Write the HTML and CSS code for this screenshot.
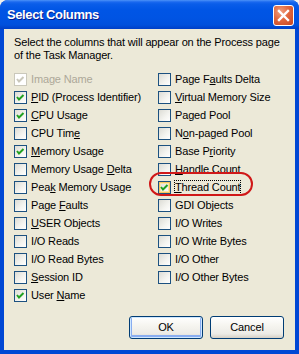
FILE: index.html
```html
<!DOCTYPE html>
<html>
<head>
<meta charset="utf-8">
<link rel="stylesheet" href="styles.css">
</head>
<body>
<div class="window">
  <div class="titlebar">
    <span class="title">Select Columns</span>
    <span class="close"><svg width="19" height="19" viewBox="0 0 19 19"><path d="M5 5 L14 14 M14 5 L5 14" stroke="#fff" stroke-width="2.4" stroke-linecap="square"/></svg></span>
  </div>
  <div class="client">
    <p class="desc">Select the columns that will appear on the Process page<br>of the Task Manager.</p>
    <div class="cols">
      <div class="col left">
        <div class="item disabled"><span class="box on"><svg viewBox="0 0 11 11"><polyline points="2,5 4,7.5 8.5,3" /></svg></span><span class="text">Image Name</span></div>
        <div class="item"><span class="box on"><svg viewBox="0 0 11 11"><polyline points="2,5 4,7.5 8.5,3" /></svg></span><span class="text"><u>P</u>ID (Process Identifier)</span></div>
        <div class="item"><span class="box on"><svg viewBox="0 0 11 11"><polyline points="2,5 4,7.5 8.5,3" /></svg></span><span class="text"><u>C</u>PU Usage</span></div>
        <div class="item"><span class="box"></span><span class="text">CPU Tim<u>e</u></span></div>
        <div class="item"><span class="box on"><svg viewBox="0 0 11 11"><polyline points="2,5 4,7.5 8.5,3" /></svg></span><span class="text"><u>M</u>emory Usage</span></div>
        <div class="item"><span class="box"></span><span class="text">Memory Usage <u>D</u>elta</span></div>
        <div class="item"><span class="box"></span><span class="text">Pea<u>k</u> Memory Usage</span></div>
        <div class="item"><span class="box"></span><span class="text">Page <u>F</u>aults</span></div>
        <div class="item"><span class="box"></span><span class="text"><u>U</u>SER Objects</span></div>
        <div class="item"><span class="box"></span><span class="text">I/O Reads</span></div>
        <div class="item"><span class="box"></span><span class="text">I/O Read Bytes</span></div>
        <div class="item"><span class="box"></span><span class="text"><u>S</u>ession ID</span></div>
        <div class="item"><span class="box on"><svg viewBox="0 0 11 11"><polyline points="2,5 4,7.5 8.5,3" /></svg></span><span class="text">User <u>N</u>ame</span></div>
      </div>
      <div class="col right">
        <div class="item"><span class="box"></span><span class="text">Page F<u>a</u>ults Delta</span></div>
        <div class="item"><span class="box"></span><span class="text"><u>V</u>irtual Memory Size</span></div>
        <div class="item"><span class="box"></span><span class="text">Paged Pool</span></div>
        <div class="item"><span class="box"></span><span class="text">N<u>o</u>n-paged Pool</span></div>
        <div class="item"><span class="box"></span><span class="text">Base P<u>r</u>iority</span></div>
        <div class="item"><span class="box"></span><span class="text"><u>H</u>andle Count</span></div>
        <div class="item"><span class="box on hot"><svg viewBox="0 0 11 11"><polyline points="2,5 4,7.5 8.5,3" /></svg></span><span class="text focus"><u>T</u>hread Count</span></div>
        <div class="item"><span class="box"></span><span class="text">GDI Objects</span></div>
        <div class="item"><span class="box"></span><span class="text">I/O Writes</span></div>
        <div class="item"><span class="box"></span><span class="text">I/O Write Bytes</span></div>
        <div class="item"><span class="box"></span><span class="text">I/O Other</span></div>
        <div class="item"><span class="box"></span><span class="text">I/O Other Bytes</span></div>
      </div>
    </div>
    <div class="buttons">
      <span class="btn default">OK</span>
      <span class="btn">Cancel</span>
    </div>
    <div class="annot"></div>
  </div>
</div>
</body>
</html>
```

FILE: styles.css
```css
html, body {
  margin: 0;
  padding: 0;
  background: #f0f0ee;
}
.window {
  width: 299px;
  height: 354px;
  background: #0047d4;
  border-radius: 8px 8px 0 0;
  overflow: hidden;
  display: flex;
  flex-direction: column;
  font-family: "Liberation Sans", Arial, sans-serif;
}
.titlebar {
  height: 29px;
  flex: none;
  display: flex;
  align-items: center;
  padding: 0 5px 0 7px;
  background: linear-gradient(#4c92f8 0px, #1a68ef 2px, #0a5de9 4px, #0055e5 10px, #0054e3 18px, #0050dc 25px, #003fc6 29px);
}
.title {
  flex: 1;
  color: #fff;
  font-weight: bold;
  font-size: 13px;
  letter-spacing: -0.4px;
  text-shadow: 1px 1px 0 #0a1a8a;
  padding-bottom: 1px;
}
.close {
  width: 19px;
  height: 19px;
  border: 1px solid #fff;
  border-radius: 3px;
  background: radial-gradient(circle at 35% 30%, #f0a080 0%, #e2683f 45%, #c8451e 100%);
  display: flex;
  margin-top: 1px;
}
.client {
  position: relative;
  flex: 1;
  margin: 0 4px 4px;
  background: #ece9d8;
  display: flex;
  flex-direction: column;
  padding: 7px 11px 11px 10px;
  font-size: 11px;
  letter-spacing: -0.15px;
  color: #000;
}
.desc {
  margin: 0;
  line-height: 13px;
  white-space: nowrap;
}
.cols {
  display: flex;
  margin-top: 9px;
}
.col.left {
  width: 144px;
}
.item {
  display: flex;
  align-items: flex-start;
  height: 18px;
}
.box {
  box-sizing: border-box;
  width: 13px;
  height: 13px;
  margin-top: 2px;
  border: 1px solid #1c5180;
  background: linear-gradient(135deg, #dcdcd5 0%, #f4f4f0 60%, #ffffff 100%);
  display: flex;
  flex: none;
}
.box svg {
  width: 11px;
  height: 11px;
}
.box polyline {
  fill: none;
  stroke: #21a121;
  stroke-width: 2;
}
.box.hot {
  box-shadow: inset 0 0 0 1px #f8c860, inset 0 0 0 2px #fce7a8;
}
.text {
  margin-left: 4px;
  margin-top: 2px;
  line-height: 13px;
  white-space: nowrap;
}
.text.focus {
  outline: 1px dotted #000;
  outline-offset: 0;
}
.disabled .box {
  border-color: #cac8bb;
  background: #fff;
}
.disabled .box polyline {
  stroke: #cac8bb;
}
.disabled .text {
  color: #aca899;
}
.buttons {
  margin-top: auto;
  display: flex;
  justify-content: flex-end;
  gap: 7px;
}
.btn {
  box-sizing: border-box;
  width: 74px;
  height: 23px;
  border: 1px solid #003c74;
  border-radius: 3px;
  background: linear-gradient(#ffffff 0%, #f6f5f0 40%, #ecebe6 80%, #d6d0c5 100%);
  display: flex;
  align-items: center;
  justify-content: center;
  line-height: 13px;
}
.btn.default {
  box-shadow: inset 0 0 0 1px #cee7ff, inset 0 -1px 0 2px #89adf0;
}
.annot {
  position: absolute;
  left: 145px;
  top: 143px;
  width: 100px;
  height: 20px;
  border: 2px solid #d01818;
  border-radius: 12px;
}
```
